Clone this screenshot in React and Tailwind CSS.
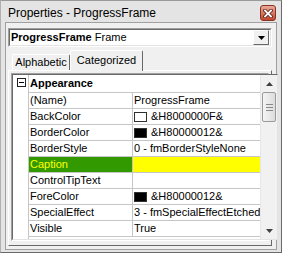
import React from "react";

const rows = [
  { name: "(Name)", value: "ProgressFrame" },
  { name: "BackColor", value: "&H8000000F&", swatch: "bg-white" },
  { name: "BorderColor", value: "&H80000012&", swatch: "bg-black" },
  { name: "BorderStyle", value: "0 - fmBorderStyleNone" },
  { name: "Caption", value: "", selected: true },
  { name: "ControlTipText", value: "" },
  { name: "ForeColor", value: "&H80000012&", swatch: "bg-black" },
  { name: "SpecialEffect", value: "3 - fmSpecialEffectEtched" },
  { name: "Visible", value: "True" },
];

function CloseButton() {
  return (
    <div className="mt-[4px] w-[16px] h-[16px] rounded-[3px] border border-[#8a3324] bg-gradient-to-b from-[#e9a999] to-[#c2452f] flex items-center justify-center">
      <svg width="10" height="9" viewBox="0 0 10 9">
        <path d="M2 1.5 L8 7.5 M8 1.5 L2 7.5" stroke="#5a1a10" strokeWidth="3.4" strokeLinecap="square" />
        <path d="M2 1.5 L8 7.5 M8 1.5 L2 7.5" stroke="#ffffff" strokeWidth="1.8" strokeLinecap="square" />
      </svg>
    </div>
  );
}

function Scrollbar() {
  return (
    <div className="w-[17px] flex flex-col bg-[#f1f1f1] border-l border-[#e6e6e6]">
      <div className="h-[17px] flex items-center justify-center">
        <svg width="7" height="4" viewBox="0 0 7 4">
          <path d="M0 4 L3.5 0 L7 4 Z" fill="#404040" />
        </svg>
      </div>
      <div className="mx-[1px] h-[30px] rounded-[2px] border border-[#9a9a9a] bg-gradient-to-r from-[#f4f4f4] to-[#dcdcdc] flex flex-col items-center justify-center gap-[2px]">
        <div className="w-[7px] h-px bg-[#8a8a8a]" />
        <div className="w-[7px] h-px bg-[#8a8a8a]" />
        <div className="w-[7px] h-px bg-[#8a8a8a]" />
      </div>
      <div className="flex-1" />
      <div className="h-[17px] flex items-center justify-center">
        <svg width="7" height="4" viewBox="0 0 7 4">
          <path d="M0 0 L7 0 L3.5 4 Z" fill="#404040" />
        </svg>
      </div>
    </div>
  );
}

function PropertyRow({ row }) {
  const nameCls = row.selected
    ? "bg-[#339900] text-[#ffff00]"
    : "bg-white text-black";
  const valueCls = row.selected ? "bg-[#ffff00]" : "bg-white";
  return (
    <div className="h-[16px] flex border-b border-[#c6c6c6]">
      <div className={`w-[104px] shrink-0 border-r border-[#c6c6c6] pl-[1px] flex items-center whitespace-nowrap overflow-hidden ${nameCls}`}>
        {row.name}
      </div>
      <div className={`flex-1 min-w-0 pl-[1px] flex items-center whitespace-nowrap overflow-hidden ${valueCls}`}>
        {row.swatch && (
          <span className={`w-[13px] h-[10px] shrink-0 border border-[#303030] mr-[4px] ${row.swatch}`} />
        )}
        {row.value}
      </div>
    </div>
  );
}

export default function App() {
  return (
    <div className="w-[282px] h-[253px] bg-[#e4e4e4] border border-[#6a6a6a] border-l-[#b0b0b0] border-t-[#9a9a9a] flex flex-col overflow-hidden font-['Liberation_Sans',Arial,sans-serif] text-[11px] text-black">
      <div className="h-[21px] flex items-start justify-between pl-[7px] pr-[5px]">
        <span className="mt-[5px] text-[12px] leading-[14px]">Properties - ProgressFrame</span>
        <CloseButton />
      </div>

      <div className="mx-[4px] mb-[2px] flex-1 flex flex-col border border-[#a0a0a0] bg-[#f0f0f0] pl-[2px] pt-[5px] pb-[3px]">
        {/* object combo */}
        <div className="w-[264px] h-[19px] border border-t-[#a0a0a0] border-l-[#a0a0a0] border-r-white border-b-white">
          <div className="h-full flex items-center border border-t-[#696969] border-l-[#696969] border-r-[#e3e3e3] border-b-[#e3e3e3] bg-white pl-[1px]">
            <span className="flex-1 whitespace-nowrap">
              <span className="font-bold">ProgressFrame</span> Frame
            </span>
            <div className="w-[16px] h-[15px] mr-[1px] bg-[#f0f0f0] border border-t-white border-l-white border-r-[#696969] border-b-[#696969] flex items-center justify-center">
              <svg width="7" height="4" viewBox="0 0 7 4">
                <path d="M0 0 L7 0 L3.5 4 Z" fill="#000" />
              </svg>
            </div>
          </div>
        </div>

        {/* tabs */}
        <div className="mt-[3px] h-[20px] flex items-end pl-[4px]">
          <div className="w-[58px] h-[16px] border border-b-0 border-t-white border-l-white border-r-[#696969] rounded-t-[2px] flex items-center justify-center">
            Alphabetic
          </div>
          <div className="relative z-10 -mb-px w-[73px] h-[21px] bg-[#f0f0f0] border border-b-0 border-t-white border-l-white border-r-[#696969] rounded-t-[2px] flex items-center justify-center pb-[2px]">
            Categorized
          </div>
        </div>

        {/* tab panel */}
        <div className="w-[264px] flex-1 flex flex-col border border-t-white border-l-white border-r-[#696969] border-b-[#696969] pl-[2px] pr-[2px] pt-[2px] pb-[4px]">
          <div className="flex-1 flex border border-t-[#a0a0a0] border-l-[#a0a0a0] border-r-white border-b-white">
            <div className="flex-1 flex border border-t-[#696969] border-l-[#696969] border-r-[#e3e3e3] border-b-[#e3e3e3] bg-white">
              {/* gutter */}
              <div className="w-[16px] shrink-0 border-r border-[#c6c6c6] pl-[4px] pt-[3px]">
                <svg width="9" height="9" viewBox="0 0 9 9">
                  <rect x="0.5" y="0.5" width="8" height="8" fill="#fff" stroke="#202020" />
                  <path d="M2 4.5 H7" stroke="#000" />
                </svg>
              </div>
              {/* property list */}
              <div className="flex-1 min-w-0 flex flex-col">
                <div className="h-[18px] flex items-center pl-[1px] border-b border-[#c6c6c6] font-bold">
                  Appearance
                </div>
                {rows.map((row) => (
                  <PropertyRow key={row.name} row={row} />
                ))}
              </div>
              <Scrollbar />
            </div>
          </div>
        </div>
      </div>
    </div>
  );
}
